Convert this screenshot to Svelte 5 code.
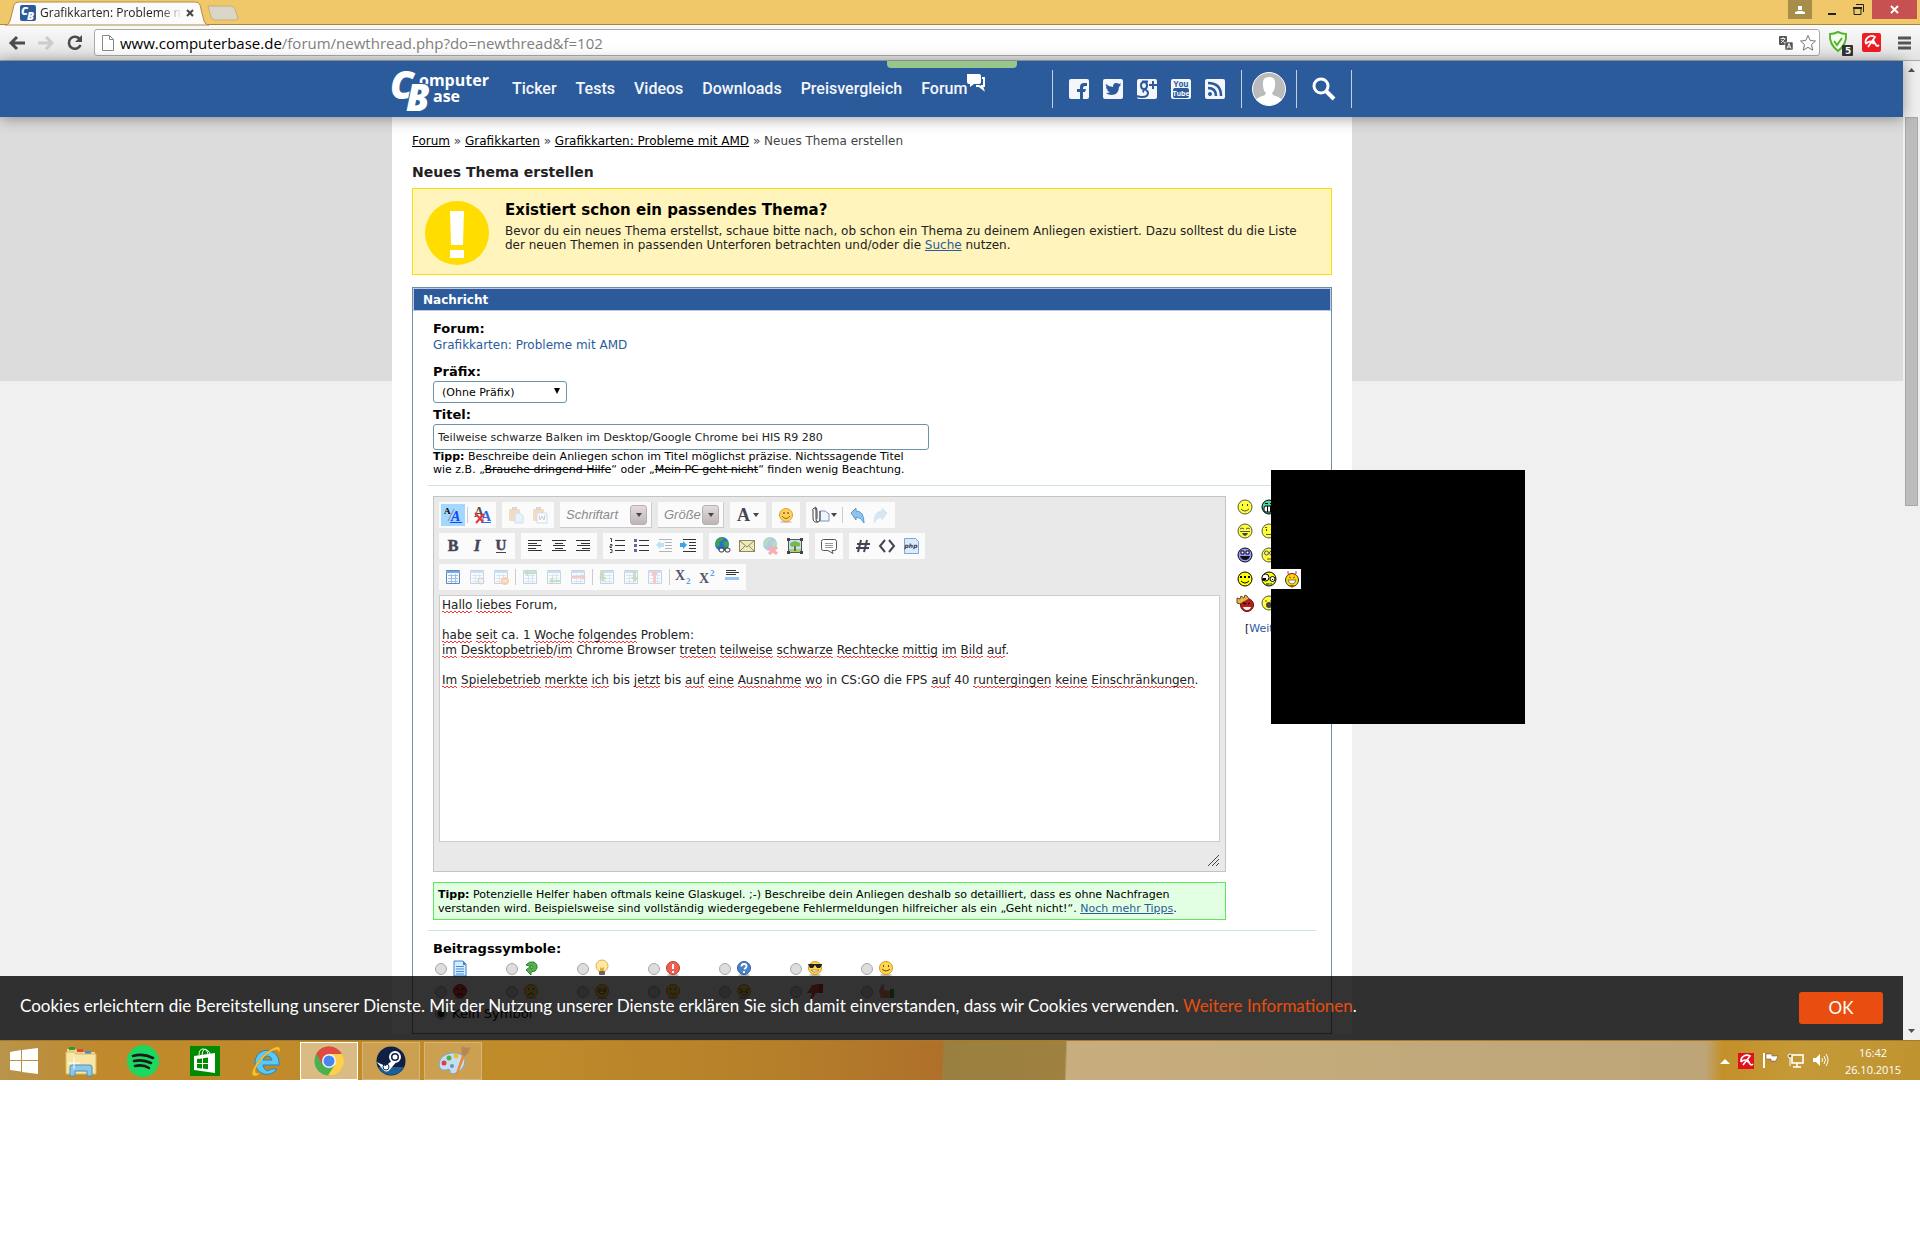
<script>
  // Forum "new thread" page inside a desktop browser window, with the taskbar below.
  const nav = ['Ticker', 'Tests', 'Videos', 'Downloads', 'Preisvergleich'];
  const social = ['facebook', 'twitter', 'gplus', 'youtube', 'rss'];

  // '|' is a separator inside a button group
  const row2 = [
    ['bold', 'italic', 'underline'],
    ['left', 'center', 'right'],
    ['ol', 'ul', 'outdent', 'indent'],
    ['link', 'mail', 'unlink', 'image'],
    ['quote'],
    ['hash', 'code', 'php'],
  ];
  const row3 = ['table', 'tableProps', 'tableDel', '|', 'rowBefore', 'rowAfter', 'rowDel', '|', 'colBefore', 'colAfter', 'colDel', '|', 'sub', 'sup', 'hr'];
  const disabled = ['outdent', 'unlink', 'tableProps', 'tableDel', 'rowBefore', 'rowAfter', 'rowDel', 'colBefore', 'colAfter', 'colDel', 'paste', 'pasteWord', 'redo'];

  // words between ~ ~ are flagged by the spell checker
  const message = [
    '~Hallo~ ~liebes~ Forum,',
    '',
    '~habe~ ~seit~ ca. 1 ~Woche~ ~folgendes~ Problem:',
    '~im~ ~Desktopbetrieb~/~im~ Chrome Browser ~treten~ ~teilweise~ ~schwarze~ ~Rechtecke~ ~mittig~ ~im~ ~Bild~ ~auf~.',
    '',
    '~Im~ ~Spielebetrieb~ ~merkte~ ~ich~ bis ~jetzt~ bis ~auf~ ~eine~ ~Ausnahme~ ~wo~ in CS:GO die FPS ~auf~ 40 ~runtergingen~ ~keine~ ~Einschränkungen~.',
  ];

  const smilies = [['smile', 'biggrin'], ['laugh', 'sad'], ['blue', 'roll'], ['dots', 'crazy', 'devil'], ['king', 'eek']];
  const postIcons = [
    ['doc', 'arrow', 'bulb', 'alert', 'question', 'cool', 'happy'],
    ['angry', 'frown', 'grin', 'blush', 'lol', 'down', 'up'],
  ];
  const tasks = ['explorer', 'spotify', 'store', 'ie', 'chrome', 'steam', 'paint'];

  let title = $state('Teilweise schwarze Balken im Desktop/Google Chrome bei HIS R9 280');
  let symbol = $state('none');

  const rect = (x, y, w, h, f) => `<rect x="${x}" y="${y}" width="${w}" height="${h}" fill="${f}"/>`;
  const lines = (rows) => rows.map(([x, y, w]) => rect(x, y, w, 1, '#333')).join('');
  const grid = '<path d="M3.500 3.500h13v13h-13z" fill="#f4f9ff" stroke="#5c8ac0"/><path d="M3 5h14" stroke="#7ba7dc" stroke-width="2"/><path d="M5 8.500h10M5 11.500h10M5 14.500h10M8.500 7v9M12.500 7v9" stroke="#9dbfe6"/>';
  const globe = '<circle cx="9" cy="8" r="7" fill="#2b6fc9"/><path d="M3 5q4-5 8-3l-2 3-3 1 1 3-3 2q-2-3-1-6zM10 6l4-1 2 3-3 4-2-2z" fill="#3fa648"/>';
  const chain = '<rect x="6" y="12" width="5" height="4" rx="2" fill="#fff" stroke="#333"/><rect x="12" y="12" width="5" height="4" rx="2" fill="#fff" stroke="#333"/>';
  const orb = (c, edge) => `<ellipse cx="8" cy="15" rx="6" ry="1" fill="#bbb"/><circle cx="8" cy="8" r="6.500" fill="${c}" stroke="${edge}"/>`;
  const yellow = orb('#ffd84a', '#d8961c');
  const face = (c, e) => `<circle cx="8" cy="8" r="7" fill="${c}" stroke="${e}"/>`;
  const umbrella = '<path d="M3 9a6 6 0 0 1 9-6L5 12M3 9q4-4 7 0M9 6l3 5q1 2 3 0" fill="none" stroke="#fff" stroke-width="1.600"/>';

  const icons = {
    facebook: '<rect width="20" height="20" rx="2" fill="#f4f6fb"/><path d="M11 20v-7H8v-3h3V8q0-4 4-4h3v3h-2q-2 0-2 2v1h3l-1 3h-2v7z" fill="#2b5b9b"/>',
    twitter: '<rect width="20" height="20" rx="2" fill="#f4f6fb"/><path d="M3 5q3 3 7 3 0-4 3-4 2 0 3 1l2-1-1 2 1 0-2 2q0 7-7 8-4 0-6-2 3 0 4-1-2 0-3-2h1q-2-1-2-3h1Q2 7 3 5z" fill="#2b5b9b"/>',
    gplus: '<rect width="20" height="20" rx="2" fill="#f4f6fb"/><path d="M7 3q-3 0-3 3.500T7 10q3 0 3-3.500T7 3zM8 10q3 2 3 4 0 4-6 4-3 0-5-1M8 10q-3 2-1 3M5 2.500h6M16 2v8M12 6h8" fill="none" stroke="#2b5b9b" stroke-width="2"/>',
    youtube: '<rect width="20" height="20" rx="2" fill="#f4f6fb"/><rect x="2" y="9" width="16" height="10" rx="2" fill="#2b5b9b"/><text x="10" y="8" text-anchor="middle" font-size="8" font-weight="700" fill="#2b5b9b">You</text><text x="10" y="17" text-anchor="middle" font-size="7" font-weight="700" fill="#f4f6fb">Tube</text>',
    rss: '<rect width="20" height="20" rx="2" fill="#f4f6fb"/><circle cx="5" cy="15" r="2" fill="#2b5b9b"/><path d="M3 9q8 0 8 8M3 4q13 0 13 13" fill="none" stroke="#2b5b9b" stroke-width="2.500"/>',
    mode: '<text x="1" y="9" font-size="9" font-family="Liberation Serif" font-weight="700">A</text><path d="M5 16L11 4" stroke="#888"/><text x="8" y="16" font-size="14" font-family="Liberation Serif" font-style="italic" font-weight="700" fill="#14f">A</text><path d="M7 17.500h12" stroke="#14f"/>',
    clear: '<text x="2" y="12" font-size="14" font-family="Liberation Serif" font-weight="700" fill="#555">A</text><text x="9" y="16" font-size="14" font-family="Liberation Serif" font-weight="700" fill="#36e">A</text><path d="M9 17.500h10" stroke="#36e"/><path d="M3 8l8 9M12 9l-8 9" stroke="#e33" stroke-width="2"/>',
    paste: '<rect x="3" y="4" width="11" height="12" rx="1" fill="#e6a857"/><rect x="6" y="2" width="5" height="3" fill="#999"/><path d="M9 8h5l3 3v7H9z" fill="#cfe3f8" stroke="#7ea6d4"/>',
    pasteWord: '<rect x="3" y="4" width="11" height="12" rx="1" fill="#e6a857"/><rect x="6" y="2" width="5" height="3" fill="#999"/><path d="M7 8h10v10H7z" fill="#fff" stroke="#7ea6d4"/><path d="M9 10l1 5 2-4 2 4 1-5" fill="none" stroke="#57a"/>',
    emoji: '<ellipse cx="10" cy="17" rx="6" ry="1" fill="#ccc"/><circle cx="10" cy="10" r="6.500" fill="#ffd257" stroke="#e0a030"/><circle cx="8" cy="8" r="1" fill="#864"/><circle cx="12" cy="8" r="1" fill="#864"/><path d="M6 11q4 5 8 0" fill="none" stroke="#864"/>',
    undo: '<path d="M4 8l5-5v3q8 0 8 12-3-6-8-6v3z" fill="#8fc4ec" stroke="#5a9bd0"/>',
    redo: '<path d="M16 8l-5-5v3q-8 0-8 12 3-6 8-6v3z" fill="#8fc4ec" stroke="#8fc4ec"/>',
    clip: '<path d="M9 6h5l4 3v7H9z" fill="#eef5ff" stroke="#7a94b8"/><path d="M9 6v8q0 3-2 3t-2-3V6q0-4-2-3T2 6v7q0 5 5 4M6 6q0-4-2-4M6 6v8" fill="none" stroke="#444"/>',
    bold: '<text x="10" y="15" text-anchor="middle" font-size="16" font-family="Liberation Serif" font-weight="700" fill="#445" stroke="#445" stroke-width=".5">B</text>',
    italic: '<text x="10" y="15" text-anchor="middle" font-size="16" font-family="Liberation Serif" font-weight="700" font-style="italic" fill="#445" stroke="#445" stroke-width=".5">I</text>',
    underline: '<text x="10" y="14" text-anchor="middle" font-size="15" font-family="Liberation Serif" font-weight="700" fill="#445" stroke="#445" stroke-width=".5">U</text><path d="M5 16.500h10" stroke="#445"/>',
    left: lines([[3, 4, 14], [3, 7, 9], [3, 9, 13], [3, 12, 8], [3, 14, 14]]),
    center: lines([[3, 4, 14], [6, 7, 8], [4, 9, 12], [6, 12, 8], [3, 14, 14]]),
    right: lines([[3, 4, 14], [8, 7, 9], [4, 9, 13], [9, 12, 8], [3, 14, 14]]),
    ol: lines([[8, 4, 10], [8, 9, 10], [8, 14, 10]]) + '<path d="M3 2.500h1.500V6M3 8.500h2v1.500H3v1.500h2M3 13.500h2v3H3" fill="none" stroke="#445"/>',
    ul: lines([[8, 4, 10], [8, 9, 10], [8, 14, 10]]) + rect(3, 3, 3, 3, '#669') + rect(3, 8, 3, 3, '#669') + rect(3, 13, 3, 3, '#669'),
    outdent: lines([[4, 3, 13], [10, 6, 7], [10, 9, 7], [10, 12, 7], [4, 15, 13]]) + '<path d="M1 9l4-4v2h4v4H5v2z" fill="#4cb2ee"/>',
    indent: lines([[4, 3, 13], [10, 6, 7], [10, 9, 7], [10, 12, 7], [4, 15, 13]]) + '<path d="M8 9L4 5v2H1v4h3v2z" fill="#3aa6e8"/>',
    link: globe + chain,
    mail: '<rect x="2.500" y="4.500" width="15" height="11" fill="#eeeac0" stroke="#8c8a5a"/><path d="M3 5l7 6 7-6M3 15l5-5M17 15l-5-5" fill="none" stroke="#8c8a5a"/>',
    unlink: globe + '<path d="M8 11l8 7M16 11l-8 7" stroke="#e22" stroke-width="3"/>',
    image: '<rect x="3.500" y="3.500" width="13" height="13" fill="#bfe0f8" stroke="#555"/><path d="M4 13h12v3H4z" fill="#a4d070"/><path d="M9 9h2v6H9z" fill="#864"/><path d="M5 9q0-3 3-3 2-2 4 0 4 0 3 4-3 1-5 0-4 2-5-1z" fill="#7ab648"/>' + [[2, 2], [15, 2], [2, 15], [15, 15]].map(([x, y]) => rect(x, y, 3, 3, '#444')).join(''),
    quote: '<path d="M4.500 3.500h11q2 0 2 2v7q0 2-2 2H13l1 3-5-3H4.500q-2 0-2-2v-7q0-2 2-2z" fill="#fff" stroke="#555"/><path d="M6 7.500h8M6 9.500h8M6 11.500h8" stroke="#999"/>',
    hash: '<path d="M8 4L5 16M14 4l-3 12M4 8h13M3 12h13" stroke="#445" stroke-width="2"/>',
    code: '<path d="M8 4l-5 6 5 6M12 4l5 6-5 6" fill="none" stroke="#445" stroke-width="2"/>',
    php: '<path d="M3.500 2.500h11l3 3v12h-14z" fill="#dcebfb" stroke="#7ea6d4"/><text x="10" y="12" text-anchor="middle" font-size="6" font-weight="700" font-style="italic" fill="#334">php</text>',
    table: grid,
    tableProps: grid + '<circle cx="14" cy="14" r="3" fill="#ddd" stroke="#777"/>',
    tableDel: grid + '<circle cx="14" cy="14" r="4" fill="#f08030"/><path d="M12 14h4" stroke="#fff"/>',
    rowBefore: grid + '<path d="M17 7H8v2L4 6l4-4v3h9z" fill="#5fae4e"/>',
    rowAfter: grid + '<path d="M17 15H9v2l-4-3 4-4v3h8z" fill="#5fae4e"/>',
    rowDel: grid + '<path d="M3 9h11V7l4 3-4 3v-2H3z" fill="#f06a6a"/>',
    colBefore: grid + '<path d="M4 3h3v7h2l-3 5-4-5h2z" fill="#5fae4e"/>',
    colAfter: grid + '<path d="M12 3h3v7h2l-3 5-4-5h2z" fill="#5fae4e"/>',
    colDel: grid + '<path d="M8 17V8H6l4-5 3 5h-2v9z" fill="#f06a6a"/>',
    sub: '<text x="1" y="13" font-size="14" font-family="Liberation Serif" font-weight="700" fill="#556">X</text><text x="12" y="17" font-size="9" font-family="Liberation Serif" font-weight="700" fill="#5b9be6">2</text>',
    sup: '<text x="1" y="16" font-size="14" font-family="Liberation Serif" font-weight="700" fill="#556">X</text><text x="12" y="9" font-size="9" font-family="Liberation Serif" font-weight="700" fill="#5b9be6">2</text>',
    hr: lines([[4, 3, 10], [4, 5, 13], [4, 7, 10]]) + rect(3, 10, 14, 3, '#9cc4f4'),

    smile: face('#ff3', '#555') + '<path d="M5 5h1v2H5zM10 5h1v2h-1z" fill="#333"/><path d="M4 10q4 4 8 0" fill="none" stroke="#555"/>',
    biggrin: face('#3fdcaa', '#000') + '<rect x="3" y="7" width="10" height="6" rx="2" fill="#fff" stroke="#000"/><path d="M6.500 7v6M9.500 7v6M4 4.500h3M9 4.500h3" stroke="#000"/>',
    laugh: face('#ff3', '#555') + '<path d="M3 6q2-2 4 0M9 6q2-2 4 0M3 8.500h10" fill="none" stroke="#555"/><path d="M5 10h6q-1 3-3 3t-3-3z" fill="#444"/>',
    sad: face('#ff3', '#555') + '<path d="M5 6h1v2H5zM10 6h1v2h-1z" fill="#333"/><path d="M5 11.500h6M4 4.500h2" stroke="#555"/>',
    blue: face('#99f', '#000') + '<path d="M4 4h3v3H4zM9 4h3v3H9z" fill="#fff" stroke="#000"/><path d="M3 9h10q-1 4-5 4t-5-4z" fill="#111"/>',
    roll: face('#ff3', '#555') + '<circle cx="5.500" cy="6" r="2" fill="#fe8" stroke="#555"/><circle cx="10.500" cy="6" r="2" fill="#fe8" stroke="#555"/><path d="M6 12h4" stroke="#555"/>',
    dots: face('#ff0', '#000') + rect(3, 5, 2, 2, '#000') + rect(7, 5, 2, 2, '#000') + rect(11, 5, 2, 2, '#000') + '<path d="M4 10q4 4 8 0" fill="none" stroke="#000"/>',
    crazy: face('#ff0', '#000') + '<circle cx="4.500" cy="6.500" r="3.500" fill="#fff" stroke="#000"/><circle cx="11.500" cy="8" r="2.500" fill="#fff" stroke="#000"/><path d="M2 7h3v2H2zM11 8h1v1h-1z"/><path d="M5 13h6" stroke="#000"/><path d="M9 12v2" stroke="#3ce" stroke-width="2"/>',
    devil: '<circle cx="8" cy="9" r="6.500" fill="#fd0" stroke="#333"/><path d="M4 0v3l2 1M12 0v3l-2 1" fill="none" stroke="#e22"/><path d="M5 6l2 1M11 6L9 7" stroke="#c22"/><path d="M4 9h8q-1 4-4 4t-4-4z" fill="#fff" stroke="#774"/><path d="M5 14h6l-3 3z" fill="#a50"/>',
    king: '<circle cx="10" cy="10" r="6.500" fill="#c01c1c" stroke="#511"/><path d="M0 3l3 1 1-3 3 2 1-3 2 1 2 3-9 5-3-1z" fill="#efb440" stroke="#643"/><path d="M6 8l3 1M11 9l2-1" stroke="#300" stroke-width="1.500"/><path d="M6 12h8q-1 3-4 3t-4-3z" fill="#fff"/>',
    eek: face('#ff3', '#555') + '<path d="M4 6h2M9 6h2" stroke="#555"/><circle cx="8" cy="10" r="3" fill="#444"/>',

    doc: '<path d="M2 1h9l3 3v12H2z" fill="#d8ecff" stroke="#3a80cc"/><path d="M11 1v4h3" fill="#3a80cc"/><path d="M4 6.500h8M4 9h8M4 11.500h8M4 14h8" stroke="#3f8fe0" stroke-width="1.200"/>',
    arrow: '<path d="M3 5q3-4 8-3 4 2 3 6-1 4-6 4v3l-5-5 5-4v3q2 0 2-2t-4-1z" fill="#55b04e" stroke="#2f8330"/>',
    bulb: '<circle cx="8" cy="6" r="6" fill="#ffe9a8" stroke="#e2ad3c"/><path d="M6 7q2 2 4 0v4H6z" fill="#f6a820"/><rect x="5" y="11" width="6" height="4" rx="1" fill="#666"/>',
    alert: orb('#ee5f50', '#c43c34') + '<path d="M8 4v5M8 11v2" stroke="#fff" stroke-width="2"/>',
    question: orb('#4a82c8', '#2f5f9f') + '<path d="M5.500 6.500q0-2.500 2.500-2.500t2.500 2-2.500 3M8 11v2" fill="none" stroke="#fff" stroke-width="1.800"/>',
    cool: yellow + '<path d="M1 4h14v1l-2 3h-3L8 5 6 8H3z" fill="#222"/><path d="M4 10h8q-4 4-8 0z" fill="#fff" stroke="#642" stroke-width=".5"/>',
    happy: yellow + '<path d="M5 6h1M10 6h1" stroke="#642" stroke-width="2"/><path d="M4 9q4 4 8 0" fill="none" stroke="#642"/>',
    angry: orb('#e0483c', '#a82a22') + '<path d="M4 5l3 2M12 5L9 7M5 12q3-3 6 0" fill="none" stroke="#400"/>',
    frown: yellow + '<path d="M5 6h1M10 6h1" stroke="#642" stroke-width="2"/><path d="M5 12q3-4 6 0" fill="none" stroke="#642"/>',
    grin: yellow + '<path d="M4 6h3M9 6h3" stroke="#642"/><path d="M4 8h8q-4 6-8 0z" fill="#fff" stroke="#642"/>',
    blush: yellow + '<path d="M5 6h1M10 6h1" stroke="#642" stroke-width="2"/><path d="M5 10q3 3 6 0" fill="none" stroke="#c42"/>',
    lol: yellow + '<path d="M3 6l3 1M13 6l-3 1" stroke="#642"/><path d="M4 9h8q-4 6-8 0z" fill="#fff" stroke="#642"/>',
    down: '<path d="M5 2l7-1v9H9l-4 6-2-1 2-5H0z" fill="#e0584c"/><rect x="12" y="1" width="4" height="9" fill="#c33"/>',
    up: '<path d="M1 8l3-7 2 1v5l6 1v7H3z" fill="#e89070"/><rect x="12" y="6" width="4" height="9" fill="#3a3"/>',

    explorer: '<path d="M2 4h9l2 3h17v22H2z" fill="#f0d684"/><path d="M4 2h6v3H4z" fill="#2a9d3a"/><path d="M12 4h6v3h-6z" fill="#d44"/><path d="M20 6h6v3h-6z" fill="#3a8ee0"/><path d="M1 7h8l2 2h20v20H1z" fill="#f8e7a4" stroke="#d8b860"/><path d="M5 31V22q0-2 2-2h18q2 0 2 2v9h-5v-5H10v5z" fill="#8cc8ec" stroke="#4a90c0"/><path d="M9 12v12M3 18h12" stroke="#fff"/>',
    spotify: '<circle cx="16" cy="16" r="16" fill="#1ed760"/><path d="M6 11q10-3 20 2M7 16q9-2 17 2M8 21q8-2 14 2" fill="none" stroke="#1c1c1c" stroke-width="2.600" stroke-linecap="round"/>',
    store: '<rect x="1" y="1" width="30" height="30" fill="#008a00"/><path d="M5 11l21-3v20L5 25z" fill="#fff"/><path d="M10 10q0-6 4-6t5 5M13 10q1-8 5-5t3 4" fill="none" stroke="#fff"/><path d="M8 14l5-.600V18H8zM14 13.300l5-.700V18h-5zM8 19h5v4.500L8 23zM14 19h5v5.200l-5-.600z" fill="#008a00"/>',
    ie: '<path d="M28 18a12 12 0 1 0-2 6h-6q-4 4-7-1-1-2-1-3h16zM12 15q1-4 4.500-4t4.500 4z" fill="#5cc8f4" stroke="#1f86c4"/><path d="M4 31Q-2 31 5 19 14 6 25 2q6-1 3 6 0-4-4-3Q15 7 6 21 1 30 9 28q-2 3-5 3z" fill="#fcc62c" stroke="#d8951a" stroke-width=".5"/>',
    chrome: '<circle cx="16" cy="16" r="14.500" fill="#4caf50"/><path d="M16 9h13a14.500 14.500 0 0 1-14 21.500l7-11z" fill="#ffd14a"/><path d="M3.400 8.700L10 20l6-11h12.700A14.500 14.500 0 0 0 3.400 8.700z" fill="#e14a3f"/><circle cx="16" cy="16" r="7" fill="#f4f4f4"/><circle cx="16" cy="16" r="5.500" fill="#4688f1"/>',
    steam: '<circle cx="16" cy="16" r="14.500" fill="#101f44"/><path d="M3 22a14.500 14.500 0 0 0 26 0z" fill="#1b5f96"/><path d="M1.500 17l9 4 6-5 4 2-6 7q-3 3-6 0z" fill="#fff"/><circle cx="20" cy="12" r="5" fill="none" stroke="#fff" stroke-width="2"/><circle cx="20" cy="12" r="2.500" fill="#fff"/><circle cx="11" cy="22" r="3" fill="none" stroke="#12305c"/>',
    paint: '<path d="M2 19q1-9 12-11 12-1 14 7 0 9-9 13-6 2-6-2 0-3-4-1-7 1-7-6z" fill="#c4dff2" stroke="#7aa6c8"/><circle cx="7" cy="18" r="2.500" fill="#e23c3c"/><circle cx="12" cy="13" r="2.500" fill="#4db04a"/><circle cx="19" cy="11" r="2.500" fill="#f6bd2c"/><circle cx="15" cy="21" r="2" fill="#6b92b8"/><path d="M18 31l7-21 3 1-8 20z" fill="#ef8a34"/><path d="M25 10q-1-6 0-9 3 3 8 1 0 5-5 9z" fill="#b98458"/>',
    umbrella: '<rect width="16" height="16" fill="#e2101c"/>' + umbrella,
    flag: '<path d="M2 1v15" stroke="#fff" stroke-width="2"/><path d="M4 2h6v2h6l-2 5H9V7H4z" fill="#fff" stroke="#543" stroke-width=".5"/>',
    network: '<rect x="5" y="3" width="11" height="8" fill="none" stroke="#fff" stroke-width="1.600"/><path d="M10 11v4M6 15h8" stroke="#fff" stroke-width="1.600"/><circle cx="3" cy="4" r="2" fill="#864" stroke="#fff"/><path d="M3 6v8" stroke="#fff"/>',
    sound: '<path d="M1 6h3l4-4v12l-4-4H1z" fill="#fff"/><path d="M10 6q1 2 0 4M12 4q3 4 0 8M14 2q4 6 0 12" fill="none" stroke="#fff"/>',
  };
</script>

{#snippet icon(name, size, box = size)}
  <svg width={size} height={size} viewBox="0 0 {box} {box}" aria-hidden="true">{@html icons[name]}</svg>
{/snippet}

{#snippet tool(name)}
  {#if name === '|'}
    <span class="sep"></span>
  {:else}
    <button type="button" class="tool" class:off={disabled.includes(name)} class:on={name === 'mode'} aria-label={name}>
      {@render icon(name, 20)}
    </button>
  {/if}
{/snippet}

<div class="desktop">
  <div class="titlebar">
    <div class="tab">
      <svg class="tab-shape" width="204" height="24" aria-hidden="true"><path d="M0 24q4 0 5-4L9 4q1-3 5-3h176q4 0 5 3l4 16q1 4 5 4z" fill="#fbfbfb" stroke="#b08d45" /></svg>
      <svg class="favicon" width="16" height="16" aria-hidden="true"><rect width="16" height="16" rx="2" fill="#2b5b9b" /><text x="1" y="10" font-size="11" font-weight="800" font-style="italic" fill="#fff">C</text><text x="7" y="15" font-size="11" font-weight="800" font-style="italic" fill="#fff">B</text></svg>
      <span class="tab-title">Grafikkarten: Probleme mit</span>
      <button class="tab-close" aria-label="Tab schließen"><svg width="8" height="8"><path d="M1 1l6 6M7 1L1 7" stroke="#444" stroke-width="2" /></svg></button>
    </div>
    <button class="new-tab" aria-label="Neuer Tab"><svg width="32" height="16"><path d="M1 1h23q3 0 4 3l3 9q0 2-2 2H8q-3 0-4-3z" fill="#d9d5c8" stroke="#c9ae72" /></svg></button>
    <div class="window-buttons">
      <button class="user" aria-label="Nutzer"><svg width="10" height="10"><path d="M3 1h4v4H3zM0 9V7l3-1h4l3 1v2z" fill="#fff" /></svg></button>
      <button class="min" aria-label="Minimieren"><svg width="8" height="8"><path d="M0 6h8v2H0z" fill="#222" /></svg></button>
      <button class="max" aria-label="Verkleinern"><svg width="11" height="11"><path d="M3 .5h7.500V8M1 3.500h7v7H1z" fill="none" stroke="#222" /><path d="M0 4h9" stroke="#222" stroke-width="2" /></svg></button>
      <button class="close" aria-label="Schließen"><svg width="9" height="9"><path d="M1 1l7 7M8 1L1 8" stroke="#fff" stroke-width="2" /></svg></button>
    </div>
  </div>

  <div class="toolbar">
    <button aria-label="Zurück"><svg width="16" height="14"><path d="M16 7H3M8 1L2 7l6 6" fill="none" stroke="#4c4c4c" stroke-width="3" /></svg></button>
    <button aria-label="Vorwärts"><svg width="16" height="14"><path d="M0 7h13M8 1l6 6-6 6" fill="none" stroke="#ccc" stroke-width="3" /></svg></button>
    <button aria-label="Neu laden"><svg width="16" height="16"><path d="M13 4.500A6 6 0 1 0 13.500 10" fill="none" stroke="#4c4c4c" stroke-width="2.600" /><path d="M15 0v7H8z" fill="#4c4c4c" /></svg></button>
    <div class="address">
      <svg width="12" height="16"><path d="M.5.5h7l4 4v11H.5zM7.500.5v4h4" fill="#fff" stroke="#888" /></svg>
      <span class="url">www.computerbase.de<span>/forum/newthread.php?do=newthread&amp;f=102</span></span>
      <svg width="14" height="14"><rect width="8" height="9" rx="1" fill="#555" /><path d="M1.500 2.500h5M4 1v2M2 7l4-4M2 4l4 3" stroke="#fff" stroke-width=".8" /><rect x="6" y="6" width="8" height="8" rx="1" fill="#555" stroke="#fff" stroke-width=".5" /><path d="M8 12.500L10 7.500l2 5M9 11h2" fill="none" stroke="#fff" /></svg>
      <svg width="18" height="18"><path d="M9 1.500l2.300 5 5.200.5-4 3.600 1.200 5.600L9 13.300l-4.700 2.900 1.200-5.600-4-3.600 5.200-.5z" fill="#fff" stroke="#777" /></svg>
    </div>
    <button aria-label="Adguard"><svg width="26" height="26"><path d="M10 2q4 2 8 2 1 10-8 17-9-7-8-17 4 0 8-2z" fill="#f3fff0" stroke="#56b32c" stroke-width="2" /><path d="M6 11l3 4 5-7" fill="none" stroke="#56b32c" stroke-width="2" /><rect x="14" y="15" width="11" height="11" rx="1" fill="#333" /><text x="17" y="24" font-size="9" font-weight="700" fill="#fff">5</text></svg></button>
    <button class="avira" aria-label="Avira"><svg width="19" height="19"><rect width="19" height="19" rx="2" fill="#ee1c25" /><path d="M4 11a6 6 0 0 1 9-7L6 14M4 11q4-5 8 0M11 7l3 5q1 2 3 0" fill="none" stroke="#fff" stroke-width="1.800" /></svg></button>
    <button class="menu" aria-label="Menü"><svg width="13" height="14"><path d="M0 2h13M0 7h13M0 12h13" stroke="#555" stroke-width="3" /></svg></button>
  </div>

  <div class="viewport">
    <div class="site">
      <header>
        <div class="wrap head">
          <a class="logo" href="/" aria-label="ComputerBase">
            <svg width="100" height="50" fill="#fff" font-weight="700">
              <text x="-2" y="35" font-size="38" font-style="italic" font-weight="800">C</text>
              <text x="27" y="22" font-size="16">omputer</text>
              <text x="14" y="47" font-size="37" font-style="italic" font-weight="800" stroke="#2b5b9b" stroke-width="2" paint-order="stroke">B</text>
              <text x="41" y="38" font-size="16">ase</text>
            </svg>
          </a>
          <nav>
            {#each nav as item}<a href="/{item.toLowerCase()}/">{item}</a>{/each}
            <a class="forum" href="/forum/">Forum<svg width="18" height="16"><path d="M0 0h12q2 0 2 2v6q0 2-2 2H7l-4 3v-3H2q-2 0-2-2z" fill="#fff" /><path d="M15 4h2v8h-2l1 3-4-3H9" fill="none" stroke="#fff" stroke-width="2" /></svg></a>
          </nav>
          <div class="social">
            {#each social as s}<a href="/{s}" aria-label={s}>{@render icon(s, 20)}</a>{/each}
          </div>
          <a class="cell" href="/forum/profile.php" aria-label="Profil">
            <svg width="34" height="34"><circle cx="17" cy="17" r="16.500" fill="#bbb" stroke="#fff" /><path d="M17 5q7 0 6 8 0 5-3 8 1 3 4 3 5 2 6 4-6 5-13 5T4 28q1-2 6-4 3 0 4-3-3-3-3-8-1-8 6-8z" fill="#fff" /></svg>
          </a>
          <a class="cell" href="/suche/" aria-label="Suche">
            <svg width="24" height="24"><circle cx="9" cy="9" r="7" fill="none" stroke="#fff" stroke-width="3" /><path d="M14 14l8 8" stroke="#fff" stroke-width="4" /></svg>
          </a>
          <span class="drawer-tab"></span>
        </div>
      </header>

      <main class="wrap">
        <div class="crumbs">
          <a href="/forum/">Forum</a> » <a href="/forum/grafikkarten">Grafikkarten</a> » <a href="/forum/amd">Grafikkarten: Probleme mit AMD</a> » Neues Thema erstellen
        </div>
        <h1>Neues Thema erstellen</h1>

        <section class="notice">
          <svg width="64" height="64" aria-hidden="true"><circle cx="32" cy="32" r="32" fill="#fd0" /><path d="M25 10h14l-1 34H26zM25 49h14v8H25z" fill="#fff" /></svg>
          <div>
            <h2>Existiert schon ein passendes Thema?</h2>
            <p>Bevor du ein neues Thema erstellst, schaue bitte nach, ob schon ein Thema zu deinem Anliegen existiert. Dazu solltest du die Liste<br />der neuen Themen in passenden Unterforen betrachten und/oder die <a href="/forum/search.php">Suche</a> nutzen.</p>
          </div>
        </section>

        <form class="panel">
          <h3>Nachricht</h3>
          <div class="fields">
            <strong class="label">Forum:</strong>
            <a class="forum-name" href="/forum/amd">Grafikkarten: Probleme mit AMD</a>
            <label class="label" for="prefix">Präfix:</label>
            <div class="prefix">
              <select id="prefix"><option>(Ohne Präfix)</option></select>
            </div>
            <label class="label title-label" for="title">Titel:</label>
            <input id="title" type="text" bind:value={title} />
            <p class="hint"><b>Tipp:</b> Beschreibe dein Anliegen schon im Titel möglichst präzise. Nichtssagende Titel<br />wie z.B. „<s>Brauche dringend Hilfe</s>“ oder „<s>Mein PC geht nicht</s>“ finden wenig Beachtung.</p>
          </div>
          <hr />

          <div class="compose">
            <div class="left">
              <div class="editor">
                <div class="tools">
                  <div class="group">{@render tool('mode')}{@render tool('|')}{@render tool('clear')}</div>
                  <div class="group">{@render tool('paste')}{@render tool('pasteWord')}</div>
                  <button type="button" class="combo font">Schriftart<i></i></button>
                  <button type="button" class="combo size">Größe<i></i></button>
                  <div class="group"><button type="button" class="tool wide color">A<i></i></button></div>
                  <div class="group">{@render tool('emoji')}</div>
                  <div class="group">
                    <button type="button" class="tool wide" aria-label="Anhänge">{@render icon('clip', 20)}<i></i></button>
                    {@render tool('|')}{@render tool('undo')}{@render tool('redo')}
                  </div>
                </div>
                <div class="tools">
                  {#each row2 as group}
                    <div class="group">{#each group as name}{@render tool(name)}{/each}</div>
                  {/each}
                </div>
                <div class="tools">
                  <div class="group">{#each row3 as name}{@render tool(name)}{/each}</div>
                </div>
                <div class="message" contenteditable="true" spellcheck="false" role="textbox" tabindex="0" aria-multiline="true" aria-label="Nachricht">
                  {#each message as line}
                    <div>{#each line.split('~') as part, i}{#if i % 2}<span class="typo">{part}</span>{:else}{part}{/if}{/each}</div>
                  {/each}
                </div>
                <svg class="grip" width="13" height="13" aria-hidden="true"><path d="M1 12L12 1M5 12l7-7M9 12l3-3" stroke="#444" /></svg>
              </div>
              <p class="tip"><b>Tipp:</b> Potenzielle Helfer haben oftmals keine Glaskugel. ;-) Beschreibe dein Anliegen deshalb so detailliert, dass es ohne Nachfragen<br />verstanden wird. Beispielsweise sind vollständig wiedergegebene Fehlermeldungen hilfreicher als ein „Geht nicht!“. <a href="/forum/tipps">Noch mehr Tipps</a>.</p>
            </div>
            <div class="smilies">
              {#each smilies as row, i}
                <div class="smiley-row" class:lifted={i === 3}>
                  {#each row as s}<button type="button" aria-label={s}>{@render icon(s, 17)}</button>{/each}
                </div>
              {/each}
              <div class="more">[<a href="/forum/smilies">Weitere</a>]</div>
            </div>
          </div>
          <hr />

          <fieldset>
            <legend>Beitragssymbole:</legend>
            {#each postIcons as row}
              <div class="symbols">
                {#each row as name}
                  <label><input type="radio" name="symbol" value={name} bind:group={symbol} aria-label={name} />{@render icon(name, 17)}</label>
                {/each}
              </div>
            {/each}
            <label class="none"><input type="radio" name="symbol" value="none" bind:group={symbol} />Kein Symbol</label>
          </fieldset>
        </form>
        <div class="blackout"></div>
      </main>

      <div class="cookies">
        <p>Cookies erleichtern die Bereitstellung unserer Dienste. Mit der Nutzung unserer Dienste erklären Sie sich damit einverstanden, dass wir Cookies verwenden. <a href="/datenschutz/">Weitere Informationen</a>.</p>
        <button>OK</button>
      </div>
    </div>
    <div class="scrollbar">
      <svg width="17" height="17"><path d="M5 11h7L8.500 7z" fill="#505050" /></svg>
      <div class="thumb"></div>
      <svg class="end" width="17" height="17"><path d="M5 6h7l-3.500 4z" fill="#505050" /></svg>
    </div>
  </div>

  <div class="taskbar">
    <button class="start" aria-label="Start"><svg width="28" height="26"><path d="M0 4l11-2v10H0zM12 2l16-2v12H12zM0 13h11v10.500L0 22zM12 13h16v13l-16-2z" fill="#fff" /></svg></button>
    {#each tasks as t}
      <button class="task" class:active={t === 'chrome'} class:running={t === 'steam' || t === 'paint'} aria-label={t}>{@render icon(t, 32)}</button>
    {/each}
    <div class="tray">
      <svg width="10" height="6"><path d="M0 6h10L5 1z" fill="#fff" /></svg>
      {@render icon('umbrella', 16)}
      {@render icon('flag', 17)}
      {@render icon('network', 17)}
      {@render icon('sound', 17)}
      <div class="clock">16:42<br />26.10.2015</div>
    </div>
  </div>
</div>

<style>
  :global(body) { margin: 0; background: #fff; }
  .desktop { font: 12px/14px "DejaVu Sans", sans-serif; color: #222; }
  .desktop * { box-sizing: border-box; }
  button { border: 0; padding: 0; background: none; font: inherit; color: inherit; display: flex; align-items: center; justify-content: center; }
  svg { display: block; flex: none; overflow: visible; }
  a { color: #2b5b9b; }
  p, h1, h2, h3 { margin: 0; }

  .titlebar { display: flex; height: 25px; background: #f0c869; border-bottom: 1px solid #a8863e; font-family: "Open Sans", sans-serif; }
  .tab { position: relative; display: flex; align-items: center; gap: 4px; width: 204px; margin-left: 5px; padding: 2px 15px 0 15px; }
  .tab-shape { position: absolute; left: 0; top: 1px; }
  .favicon, .tab-title, .tab-close { position: relative; }
  .tab-title { flex: 1; overflow: hidden; white-space: nowrap; font-size: 12px; -webkit-mask-image: linear-gradient(90deg, #000 85%, transparent); mask-image: linear-gradient(90deg, #000 85%, transparent); }
  .new-tab { margin-top: 5px; margin-left: -2px; align-self: flex-start; }
  .window-buttons { display: flex; margin-left: auto; height: 19px; padding-right: 3px; }
  .user { width: 24px; background: #a68d4a; }
  .min { width: 40px; padding-top: 2px; }
  .max { width: 12px; margin-right: 8px; }
  .close { width: 45px; background: #c75050; }

  .toolbar { display: flex; align-items: center; gap: 13px; height: 36px; padding: 0 9px; background: linear-gradient(#fafafa, #e2e2e2); border-bottom: 1px solid #a9a9a9; }
  .address { flex: 1; display: flex; align-items: center; gap: 6px; height: 27px; margin-right: -5px; margin-left: -2px; padding: 0 2px 0 7px; background: #fff; border: 1px solid #aaa; border-radius: 3px; }
  .url { flex: 1; font: 15px/22px "Open Sans", sans-serif; color: #000; }
  .url span { color: #808080; }
  .avira { margin-left: -5px; }
  .menu { margin-left: 4px; }

  .viewport { display: flex; }
  .site { flex: 1; position: relative; min-width: 0; padding-bottom: 6px; background: linear-gradient(#dcdcdc 320px, #f0f0f0 320px); }
  .wrap { position: relative; width: 960px; margin-left: round(up, calc(50% - 560px), 1px); }
  header { position: relative; z-index: 2; background: #2b5b9b; box-shadow: 0 1px 14px rgba(0, 0, 0, .4); }
  .head { display: flex; align-items: center; height: 56px; font-family: "Open Sans", sans-serif; }
  .logo { width: 120px; }
  nav { display: flex; gap: 19px; flex: 1; }
  nav a { color: #f4f6fb; font: 500 16px/24px Roboto, sans-serif; text-decoration: none; }
  .forum { display: flex; }
  .forum svg { margin-top: -3px; }
  .social { display: flex; gap: 14px; padding: 9px 16px; border: solid #c4cfe2; border-width: 0 1px; }
  .cell { display: flex; align-items: center; justify-content: center; width: 55px; height: 38px; border-right: 1px solid #c4cfe2; }
  .drawer-tab { position: absolute; left: 495px; top: 0; width: 130px; height: 7px; background: #96c68c; border-radius: 0 0 4px 4px; }

  main { padding: 17px 20px 0; background: #fff; }
  .crumbs { color: #444; }
  .crumbs a { color: #000; }
  h1 { margin-top: 15px; font-size: 14px; line-height: 18px; }
  .notice { display: flex; gap: 16px; margin-top: 7px; padding: 12px; height: 87px; background: #fff4bc; border: 1px solid #fd0; color: #222; }
  .notice h2 { color: #000; font-size: 15px; line-height: 18px; margin-bottom: 5px; }
  .panel { margin-top: 12px; border: 1px solid #6b8fa9; background: #fff; }
  .panel h3 { padding: 1px 9px 0; font-size: 12px; line-height: 20px; color: #fff; background: #2b5b9b; border: 1px solid #c4c4e4; }
  .fields { padding: 10px 20px 0; display: flex; flex-direction: column; align-items: flex-start; }
  .label { font-size: 13px; line-height: 16px; font-weight: 700; color: #000; }
  .forum-name { text-decoration: none; line-height: 16px; margin-bottom: 11px; }
  select { width: 134px; height: 22px; padding: 0 8px; appearance: none; border: 1px solid #6b93ac; border-radius: 3px; background: #fff; font: 11px "DejaVu Sans", sans-serif; color: #000; }
  .prefix { position: relative; display: flex; margin-top: 1px; }
  .prefix::after { content: ""; position: absolute; right: 7px; top: 7px; border: solid transparent; border-width: 6px 3px 0; border-top-color: #000; }
  .title-label { margin-top: 4px; }
  #title { width: 496px; height: 26px; margin-top: 1px; padding: 0 4px; border: 1px solid #6b93ac; border-radius: 3px; font: 11px "DejaVu Sans", sans-serif; color: #222; }
  .hint { font-size: 11px; line-height: 13px; color: #000; }
  hr { height: 1px; margin: 9px 15px 10px; border: 0; background: #d1e1ec; }

  .compose { display: flex; padding: 0 0 1px 20px; }
  .left { width: 793px; }
  .editor { padding: 5px 5px 4px; border: 1px solid #c4c4c4; background: #e9e9e9; }
  .tools { display: flex; gap: 6px; margin-bottom: 5px; height: 26px; }
  .group { display: flex; align-items: center; padding: 2px; background: #fbfbfb; }
  .tool { width: 24px; height: 22px; }
  .tool.on { background: #a4d7ff; }
  .tool.off svg { opacity: .35; }
  .tool.wide { width: 32px; }
  .sep { width: 1px; height: 16px; margin: 0 2px; background: #ccc; }
  .tool i, .combo i::after { content: ""; border: solid transparent; border-width: 4px 3px 0; border-top-color: #474747; }
  .color { gap: 3px; font: 700 18px "Liberation Serif", serif; color: #445; }
  .combo { justify-content: space-between; padding: 2px 4px 2px 6px; background: #fbfbfb; border-bottom: 1px solid #ccc; border-right: 1px solid #ccc; font: italic 13px "Liberation Sans", sans-serif; color: #8a8a8a; }
  .combo i { display: flex; align-items: center; justify-content: center; width: 17px; height: 20px; background: linear-gradient(#e4dcdc, #bdb5b5); border: 1px solid #b8b0b0; border-radius: 3px; }
  .font { width: 92px; }
  .size { width: 66px; }
  .message { height: 247px; padding: 2px 2px; background: #fff; border: 1px solid #ccc; line-height: 15px; outline: none; }
  .message div { min-height: 15px; white-space: nowrap; }
  .typo { padding-bottom: 1px;
    background: linear-gradient(90deg, #f33 50%, transparent 50%) 0 calc(100% - 1px) / 4px 1px repeat-x,
      linear-gradient(90deg, transparent 50%, #f33 50%) 0 100% / 4px 1px repeat-x; }
  .grip { margin: 12px 0 0 auto; }
  .tip { margin-top: 10px; padding: 5px 4px 3px; border: 1px solid #5ce65c; background: #e3ffe3; font-size: 11px; line-height: 14px; color: #000; white-space: nowrap; }

  .smilies { padding: 1px 0 0 7px; }
  .smiley-row { display: flex; height: 24px; }
  .smiley-row button { width: 24px; height: 20px; }
  .lifted { position: relative; z-index: 2; }
  .lifted button { background: #fff; }
  .lifted button:last-child { width: 20px; justify-content: flex-end; }
  .more { padding: 5px 0 0 12px; font-size: 11px; }
  .more a { text-decoration: none; }

  fieldset { margin: 0; padding: 0 20px 8px; border: 0; color: #000; }
  legend { padding: 0; font-size: 13px; line-height: 16px; font-weight: 700; }
  .symbols { display: grid; grid-template-columns: repeat(7, 71px); height: 23px; }
  .symbols label, .none { display: flex; align-items: center; gap: 5px; }
  .none { height: 22px; font-size: 13px; }
  input[type="radio"] { width: 12px; height: 12px; margin: 0 0 0 2px; appearance: none; border: 1px solid #aaa; border-radius: 50%; background: #ddd; }
  input[type="radio"]:checked { background: radial-gradient(#333 3px, #ddd 4px); }
  .blackout { position: absolute; left: 879px; top: 353px; width: 254px; height: 254px; background: #000; z-index: 1; }

  .cookies { position: absolute; z-index: 3; left: 0; right: 0; bottom: 0; display: flex; align-items: center; justify-content: space-between; height: 64px; padding: 0 20px; background: rgba(0, 0, 0, .8); font: 17px/20px Lato, sans-serif; color: #fff; }
  .cookies p { padding-bottom: 4px; }
  .cookies a { color: #e94e10; text-decoration: none; }
  .cookies button { width: 84px; height: 32px; border-radius: 3px; background: #e94e10; }
  .scrollbar { display: flex; flex-direction: column; width: 17px; background: #f0f0f0; }
  .thumb { height: 389px; margin: 39px 2px 0; background: #bcbcbc; border: 1px solid #a8a8a8; }
  .end { margin-top: auto; }

  .taskbar { display: flex; align-items: center; gap: 4px; height: 40px; border-top: 1px solid #a67a26; font-family: "Open Sans", sans-serif; color: #fff;
    background: linear-gradient(92deg, #b8944c, #c0892b 100px, #c08c2a 500px, #b57f2a 780px, #af702a 942px, #9a8040 944px, #9f8140 1065px, #c8ae7e 1067px, #bda578 1705px, #c4902a 1722px, #c49a38 1800px, #bf9430); }
  .start { width: 48px; }
  .task { width: 58px; height: 38px; border: 1px solid transparent; }
  .running { border-color: #d8b478; background: rgba(255, 255, 255, .18); }
  .active { border: 1px solid #fff; background: rgba(255, 255, 255, .42); }
  .tray { display: flex; align-items: center; gap: 8px; margin-left: auto; padding-right: 19px; }
  .clock { margin-left: 8px; font-size: 11px; line-height: 17px; text-align: center; }
</style>
